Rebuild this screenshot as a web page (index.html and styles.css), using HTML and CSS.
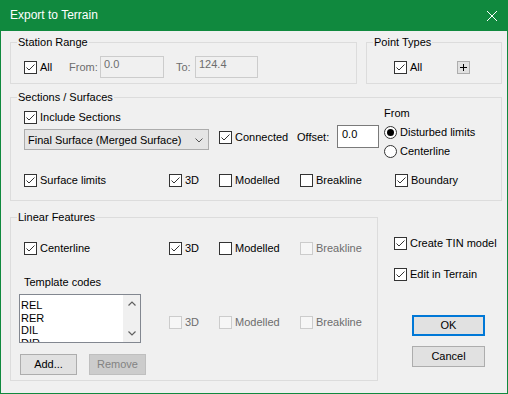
FILE: index.html
```html
<!DOCTYPE html>
<html lang="en">

<head>
    <meta charset="UTF-8">
    <title>Export to Terrain</title>
    <link rel="stylesheet" href="styles.css">
</head>

<body>
    <div class="dialog">
        <div class="titlebar">
            <span class="title">Export to Terrain</span>
            <svg class="close" width="10" height="10" viewBox="0 0 10 10"><path d="M0 0L10 10M10 0L0 10" /></svg>
        </div>

        <div class="content">
            <div class="row-top">
                <div class="group station">
                    <span class="group-title">Station Range</span>
                    <div class="line">
                        <label class="chk w45"><span class="box"><svg viewBox="0 0 11 11"><path d="M1.5 5.5l2.5 2.5 5.5-5.5" /></svg></span>All</label>
                        <span class="lbl off w31">From:</span>
                        <span class="field off w64">0.0</span>
                        <span class="lbl off to">To:</span>
                        <span class="field off w63">124.4</span>
                    </div>
                </div>
                <div class="group points">
                    <span class="group-title">Point Types</span>
                    <div class="line">
                        <label class="chk w63"><span class="box"><svg viewBox="0 0 11 11"><path d="M1.5 5.5l2.5 2.5 5.5-5.5" /></svg></span>All</label>
                        <span class="plus"><svg width="7" height="7" viewBox="0 0 7 7"><path d="M0 3.5H7M3.5 0V7" /></svg></span>
                    </div>
                </div>
            </div>

            <div class="group sections">
                <span class="group-title">Sections / Surfaces</span>
                <div class="sec-top">
                    <div class="sec-left">
                        <label class="chk"><span class="box"><svg viewBox="0 0 11 11"><path d="M1.5 5.5l2.5 2.5 5.5-5.5" /></svg></span>Include Sections</label>
                        <div class="sec-row">
                            <div class="combo">
                                <span>Final Surface (Merged Surface)</span>
                                <svg width="8" height="5" viewBox="0 0 8 5"><path d="M0.5 0.5L4 4L7.5 0.5" /></svg>
                            </div>
                            <label class="chk connected"><span class="box"><svg viewBox="0 0 11 11"><path d="M1.5 5.5l2.5 2.5 5.5-5.5" /></svg></span>Connected</label>
                            <span class="lbl offset-lbl">Offset:</span>
                            <span class="field edit">0.0</span>
                        </div>
                    </div>
                    <div class="sec-right">
                        <div class="lbl">From</div>
                        <label class="radio"><span class="rbox on"></span>Disturbed limits</label>
                        <label class="radio"><span class="rbox"></span>Centerline</label>
                    </div>
                </div>
                <div class="line checks">
                    <label class="chk w145"><span class="box"><svg viewBox="0 0 11 11"><path d="M1.5 5.5l2.5 2.5 5.5-5.5" /></svg></span>Surface limits</label>
                    <label class="chk w50"><span class="box"><svg viewBox="0 0 11 11"><path d="M1.5 5.5l2.5 2.5 5.5-5.5" /></svg></span>3D</label>
                    <label class="chk w81"><span class="box"></span>Modelled</label>
                    <label class="chk w95"><span class="box"></span>Breakline</label>
                    <label class="chk"><span class="box"><svg viewBox="0 0 11 11"><path d="M1.5 5.5l2.5 2.5 5.5-5.5" /></svg></span>Boundary</label>
                </div>
            </div>

            <div class="row-bottom">
                <div class="group linear">
                    <span class="group-title">Linear Features</span>
                    <div class="line">
                        <label class="chk w145"><span class="box"><svg viewBox="0 0 11 11"><path d="M1.5 5.5l2.5 2.5 5.5-5.5" /></svg></span>Centerline</label>
                        <label class="chk w50"><span class="box"><svg viewBox="0 0 11 11"><path d="M1.5 5.5l2.5 2.5 5.5-5.5" /></svg></span>3D</label>
                        <label class="chk w81"><span class="box"></span>Modelled</label>
                        <label class="chk off"><span class="box"></span>Breakline</label>
                    </div>
                    <div class="lin-mid">
                        <div class="codes">
                            <div class="lbl codes-lbl">Template codes</div>
                            <div class="listbox">
                                <div class="items">
                                    <div>REL</div>
                                    <div>RER</div>
                                    <div>DIL</div>
                                    <div>DIR</div>
                                </div>
                                <div class="scroll">
                                    <span class="arrow"><svg width="8" height="5" viewBox="0 0 8 5"><path d="M0.5 4.5L4 1L7.5 4.5" /></svg></span>
                                    <span class="arrow"><svg width="8" height="5" viewBox="0 0 8 5"><path d="M0.5 0.5L4 4L7.5 0.5" /></svg></span>
                                </div>
                            </div>
                        </div>
                        <div class="line code-checks">
                            <label class="chk off w50"><span class="box"></span>3D</label>
                            <label class="chk off w81"><span class="box"></span>Modelled</label>
                            <label class="chk off"><span class="box"></span>Breakline</label>
                        </div>
                    </div>
                    <div class="buttons">
                        <button class="btn small">Add...</button>
                        <button class="btn small" disabled>Remove</button>
                    </div>
                </div>

                <div class="side">
                    <label class="chk"><span class="box"><svg viewBox="0 0 11 11"><path d="M1.5 5.5l2.5 2.5 5.5-5.5" /></svg></span>Create TIN model</label>
                    <label class="chk edit-chk"><span class="box"><svg viewBox="0 0 11 11"><path d="M1.5 5.5l2.5 2.5 5.5-5.5" /></svg></span>Edit in Terrain</label>
                    <button class="btn wide ok">OK</button>
                    <button class="btn wide cancel">Cancel</button>
                </div>
            </div>
        </div>
    </div>
</body>

</html>
```

FILE: styles.css
```css
body {
    margin: 0;
    background-color: #ffffff;
    font-family: "Segoe UI", "Liberation Sans", Arial, sans-serif;
    font-size: 11px;
    line-height: 13px;
    color: #000000;
}

.dialog {
    width: 508px;
    height: 394px;
    box-sizing: border-box;
    border: 1px solid #10893e;
    border-top: 0;
    background-color: #f0f0f0;
}

.titlebar {
    height: 31px;
    background-color: #10893e;
    color: #ffffff;
    display: flex;
    align-items: center;
    justify-content: space-between;
    padding: 0 10px 0 9px;
}

.title {
    font-size: 12px;
    line-height: 15px;
}

.close path {
    stroke: #ffffff;
    stroke-width: 1;
}

.content {
    padding: 11px 5px 0 9px;
}

/* group boxes */
.group {
    position: relative;
    box-sizing: border-box;
    border: 1px solid #dcdcdc;
}

.group-title {
    position: absolute;
    top: -7px;
    left: 6px;
    padding: 0 1px;
    background-color: #f0f0f0;
}

.row-top {
    display: flex;
    gap: 9px;
}

.station {
    width: 347px;
    height: 42px;
    padding: 13px 0 0 13px;
}

.points {
    width: 136px;
    height: 42px;
    padding: 13px 0 0 27px;
}

.sections {
    margin-top: 13px;
    height: 104px;
    padding: 9px 0 0 13px;
}

.row-bottom {
    display: flex;
    margin-top: 16px;
}

.linear {
    width: 368px;
    height: 164px;
    padding: 24px 0 0 13px;
}

.line {
    display: flex;
    align-items: center;
    height: 22px;
}

.sections .line,
.linear .line {
    height: 13px;
}

/* check boxes and radios */
.chk,
.radio {
    display: flex;
    align-items: center;
    height: 13px;
    white-space: nowrap;
}

.box,
.rbox {
    flex: none;
    width: 13px;
    height: 13px;
    box-sizing: border-box;
    border: 1px solid #333333;
    background-color: #ffffff;
    margin-right: 3px;
}

.box svg {
    display: block;
    width: 11px;
    height: 11px;
    fill: none;
    stroke: #333333;
    stroke-width: 1;
}

.rbox {
    border-radius: 50%;
    display: flex;
    align-items: center;
    justify-content: center;
}

.rbox.on::after {
    content: "";
    width: 7px;
    height: 7px;
    border-radius: 50%;
    background-color: #000000;
}

.off {
    color: #6d6d6d;
}

.chk.off .box {
    border-color: #cccccc;
    background-color: #f6f6f6;
}

.w31 { width: 31px; }
.w45 { width: 45px; }
.w50 { width: 50px; }
.w63 { width: 63px; }
.w64 { width: 64px; }
.w81 { width: 81px; }
.w95 { width: 95px; }
.w145 { width: 145px; }

.to {
    margin-left: 12px;
    width: 19px;
}

/* text fields */
.field {
    box-sizing: border-box;
    height: 22px;
    padding: 1px 3px;
    border: 1px solid #cccccc;
}

.field.edit {
    width: 42px;
    height: 23px;
    padding: 2px 4px;
    background-color: #ffffff;
    border-color: #7a7a7a;
}

.plus {
    display: flex;
    align-items: center;
    justify-content: center;
    width: 13px;
    height: 13px;
    box-sizing: border-box;
    background-color: #e1e1e1;
    border: 1px solid #adadad;
}

.plus path {
    stroke: #000000;
    stroke-width: 1;
}

/* sections / surfaces */
.sec-top {
    display: flex;
}

.sec-left {
    width: 360px;
    margin-top: 4px;
}

.sec-row {
    display: flex;
    align-items: flex-start;
    margin-top: 1px;
}

.combo {
    display: flex;
    align-items: center;
    justify-content: space-between;
    box-sizing: border-box;
    width: 185px;
    height: 21px;
    margin-top: 4px;
    padding: 1px 5px 0 3px;
    background-color: #e5e5e5;
    border: 1px solid #acacac;
}

.combo path {
    fill: none;
    stroke: #555555;
    stroke-width: 1;
}

.connected {
    width: 78px;
    margin: 6px 0 0 10px;
}

.offset-lbl {
    width: 40px;
    margin-top: 6px;
}

.radio {
    margin-top: 6px;
}

.checks {
    margin-top: 16px;
}

/* linear features */
.lin-mid {
    display: flex;
    margin-top: 21px;
}

.codes {
    width: 122px;
    margin-left: -5px;
}

.codes-lbl {
    margin-left: 5px;
}

.listbox {
    display: flex;
    box-sizing: border-box;
    height: 49px;
    margin-top: 5px;
    background-color: #ffffff;
    border: 1px solid #828790;
}

.items {
    flex: 1;
    overflow: hidden;
    padding: 4px 0 0 1px;
    line-height: 12.5px;
}

.scroll {
    width: 17px;
    display: flex;
    flex-direction: column;
    justify-content: space-between;
    background-color: #f0f0f0;
}

.arrow {
    display: flex;
    align-items: center;
    justify-content: center;
    height: 17px;
}

.arrow path {
    fill: none;
    stroke: #606060;
    stroke-width: 1.2;
}

.code-checks {
    margin: 40px 0 0 28px;
}

.buttons {
    display: flex;
    gap: 12px;
    margin: 11px 0 0 -4px;
}

/* buttons */
.btn {
    box-sizing: border-box;
    height: 21px;
    padding: 0;
    font: inherit;
    color: #000000;
    background-color: #e1e1e1;
    border: 1px solid #adadad;
}

.btn.small {
    width: 57px;
}

.btn:disabled {
    color: #838383;
    background-color: #cccccc;
    border-color: #bfbfbf;
}

.side {
    display: flex;
    flex-direction: column;
    align-items: flex-start;
    padding: 20px 0 0 16px;
}

.edit-chk {
    margin-top: 18px;
}

.btn.wide {
    width: 73px;
    margin-left: 18px;
}

.ok {
    margin-top: 34px;
    border: 2px solid #0078d7;
}

.cancel {
    margin-top: 10px;
}
```
